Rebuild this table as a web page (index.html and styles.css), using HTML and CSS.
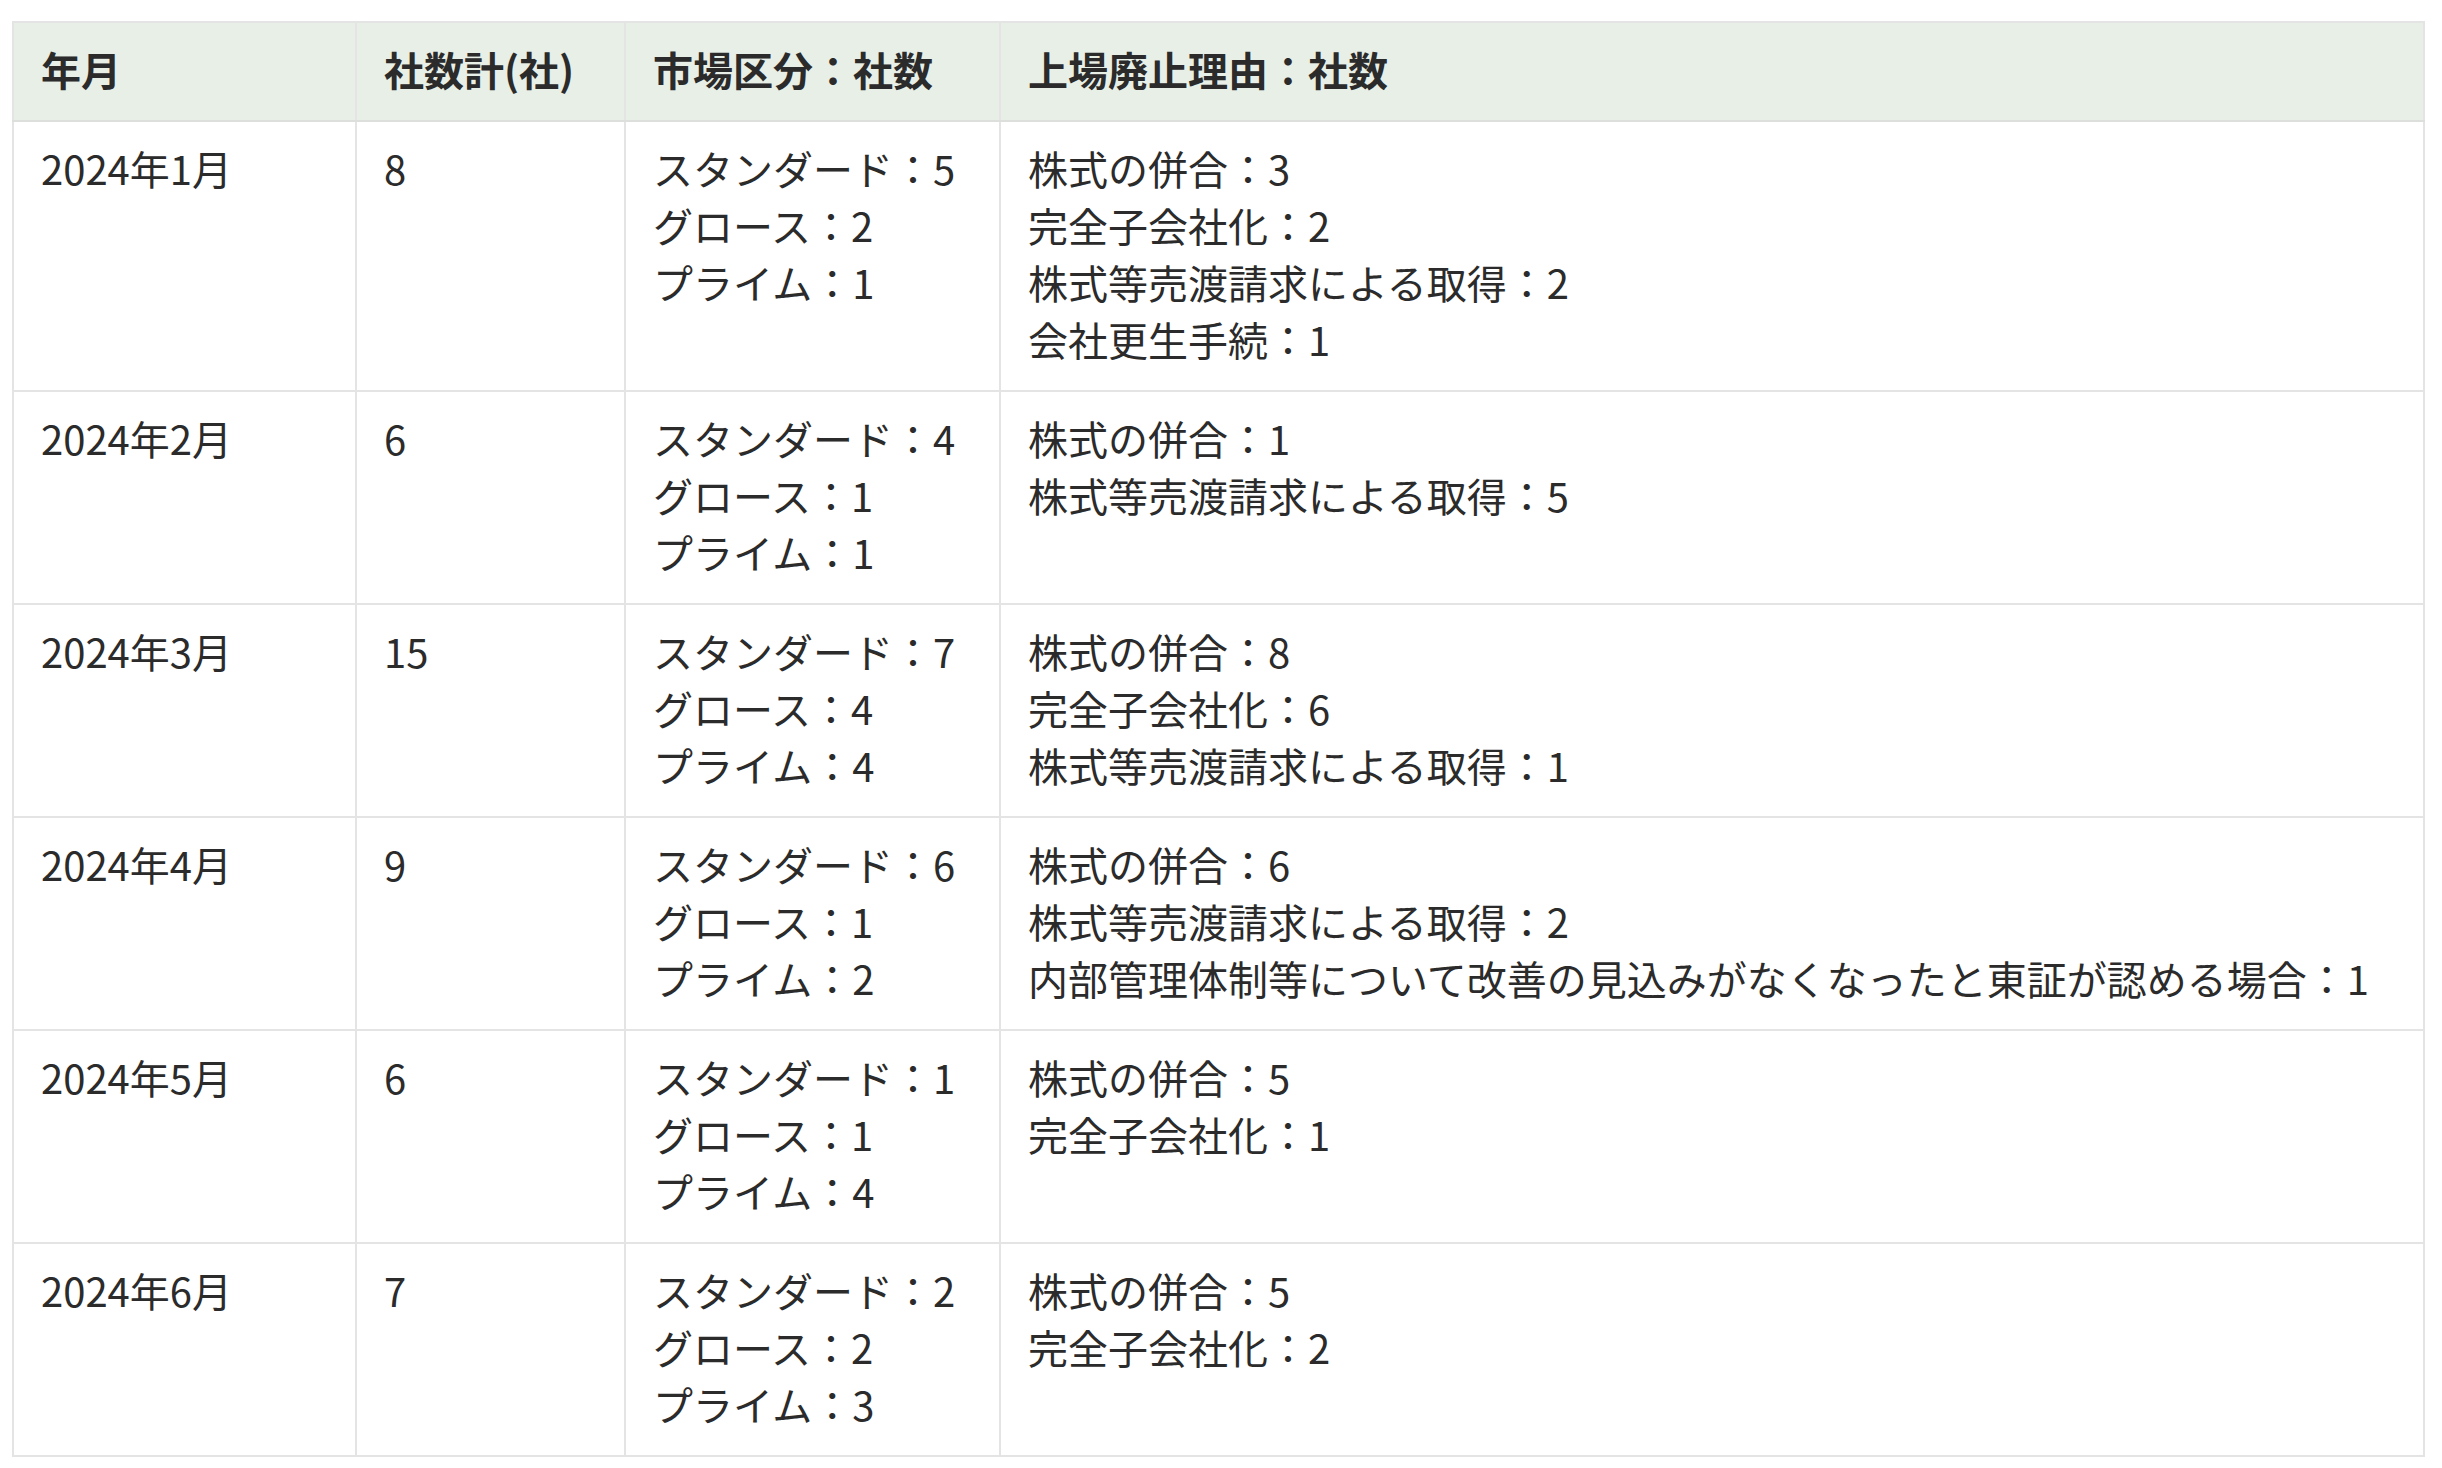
FILE: index.html
```html
<!DOCTYPE html>
<html lang="ja">
<head>
<meta charset="utf-8">
<title>上場廃止</title>
<link rel="stylesheet" href="styles.css">
</head>
<body>
<div class="wrap">
<table class="delist">
  <colgroup>
    <col class="c-month">
    <col class="c-count">
    <col class="c-market">
    <col class="c-reason">
  </colgroup>
  <thead>
    <tr>
      <th>年月</th>
      <th>社数計(社)</th>
      <th>市場区分：社数</th>
      <th>上場廃止理由：社数</th>
    </tr>
  </thead>
  <tbody>
    <tr>
      <td>2024年1月</td>
      <td>8</td>
      <td>スタンダード：5<br>グロース：2<br>プライム：1</td>
      <td>株式の併合：3<br>完全子会社化：2<br>株式等売渡請求による取得：2<br>会社更生手続：1</td>
    </tr>
    <tr>
      <td>2024年2月</td>
      <td>6</td>
      <td>スタンダード：4<br>グロース：1<br>プライム：1</td>
      <td>株式の併合：1<br>株式等売渡請求による取得：5</td>
    </tr>
    <tr>
      <td>2024年3月</td>
      <td>15</td>
      <td>スタンダード：7<br>グロース：4<br>プライム：4</td>
      <td>株式の併合：8<br>完全子会社化：6<br>株式等売渡請求による取得：1</td>
    </tr>
    <tr>
      <td>2024年4月</td>
      <td>9</td>
      <td>スタンダード：6<br>グロース：1<br>プライム：2</td>
      <td>株式の併合：6<br>株式等売渡請求による取得：2<br>内部管理体制等について改善の見込みがなくなったと東証が認める場合：1</td>
    </tr>
    <tr>
      <td>2024年5月</td>
      <td>6</td>
      <td>スタンダード：1<br>グロース：1<br>プライム：4</td>
      <td>株式の併合：5<br>完全子会社化：1</td>
    </tr>
    <tr>
      <td>2024年6月</td>
      <td>7</td>
      <td>スタンダード：2<br>グロース：2<br>プライム：3</td>
      <td>株式の併合：5<br>完全子会社化：2</td>
    </tr>
  </tbody>
</table>
</div>
</body>
</html>
```

FILE: styles.css
```css
html, body {
  margin: 0;
  padding: 0;
  background: #ffffff;
}

.wrap {
  padding: 21px 0 0 12px;
}

.delist {
  border-collapse: collapse;
  width: 2413px;
  table-layout: fixed;
  font-family: "Noto Sans CJK JP", "Noto Sans", sans-serif;
  font-size: 40px;
  line-height: 57px;
  color: #2b2b2b;
}

.c-month { width: 343px; }
.c-count { width: 269px; }
.c-market { width: 375px; }
.c-reason { width: auto; }

.delist th,
.delist td {
  border: 2px solid #e4e4e4;
  padding: 18px 27px 22px;
  text-align: left;
  vertical-align: top;
  white-space: nowrap;
}

.delist th {
  background: #e7efe7;
  font-weight: 700;
  border-bottom-color: #dcdfdc;
}

.delist td {
  font-weight: 400;
}
```
